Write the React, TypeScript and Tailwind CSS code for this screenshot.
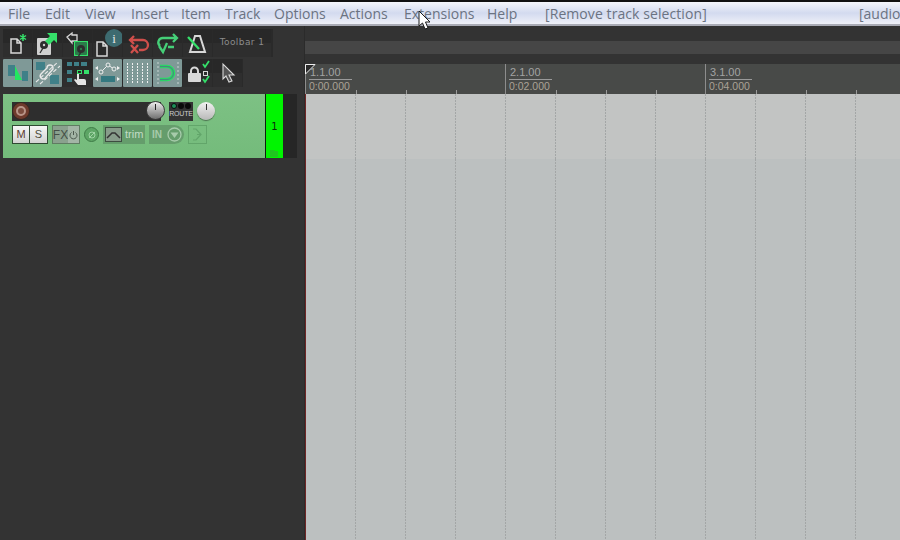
import React from "react";

const G = "#35e06a";
const W = "#d8d8d8";
const T = "#3f8088";

function Btn({ active, children }: { active?: boolean; children: React.ReactNode }) {
  return (
    <div className={`w-[29px] h-[28px] shrink-0 mr-px rounded-[1px] overflow-hidden ${active ? "bg-[#7f9997]" : "bg-gradient-to-b from-[#282828] from-50% to-[#2e2e2e] to-50%"}`}>
      <svg width="29" height="28" viewBox="0 0 29 28" className="block">{children}</svg>
    </div>
  );
}

const Doc = ({ x, y }: { x: number; y: number }) => (
  <path d={`M${x} ${y}h6l4 4v10h-10zM${x + 6} ${y}v4h4`} fill="#2a2a2a" stroke={W} strokeWidth="1.500" />
);

function Hdd({ x, y, fill = "#d0d0d0", w = 14, h = 17 }: { x: number; y: number; fill?: string; w?: number; h?: number }) {
  return (
    <g>
      <rect x={x} y={y} width={w} height={h} rx="1" fill={fill} />
      <circle cx={x + w / 2} cy={y + 7} r="4" fill="#2e2e2e" />
      <circle cx={x + w / 2} cy={y + 7} r="1.200" fill={fill} />
      <path d={`M${x + 3} ${y + 15}l3-5`} stroke="#2e2e2e" strokeWidth="1.300" />
    </g>
  );
}

function GridCells() {
  return (
    <>
      {Array.from({ length: 12 }).map((_, i) =>
        i === 0 ? (
          <div key={i} className="w-[50px] shrink-0 border-l border-l-[#6f2626]" />
        ) : (
          <div key={i} className="w-[50px] shrink-0">
            <div className="w-px h-full bg-[repeating-linear-gradient(to_bottom,#a3a6a6_0_2px,transparent_2px_3px)]" />
          </div>
        )
      )}
    </>
  );
}

function App() {
  const menu = [
    ["File", "w-[37px]"],
    ["Edit", "w-[40px]"],
    ["View", "w-[46px]"],
    ["Insert", "w-[50px]"],
    ["Item", "w-[44px]"],
    ["Track", "w-[49px]"],
    ["Options", "w-[66px]"],
    ["Actions", "w-[64px]"],
    ["Extensions", "w-[83px]"],
    ["Help", "w-[58px]"],
  ];
  const ruler = [
    ["1.1.00", "0:00.000"],
    ["2.1.00", "0:02.000"],
    ["3.1.00", "0:04.000"],
  ];
  return (
    <div className="relative w-[900px] h-[540px] overflow-hidden bg-[#333333] font-['Open_Sans','Noto_Sans',sans-serif]">
      {/* menu bar */}
      <div className="h-[26px] border-t-2 border-t-[#111111] border-b-2 border-b-[#a9abb5] bg-gradient-to-b from-[#f4f6fb] via-[#d3daef] via-50% to-[#eef0f8] flex items-center pl-2 text-[14px] text-[#6b7382] whitespace-nowrap overflow-hidden">
        {menu.map(([m, w]) => (
          <span key={m} className={`${w} shrink-0`}>{m}</span>
        ))}
        <span className="w-[314px] shrink-0 tracking-[0.08px]">[Remove track selection]</span>
        <span className="shrink-0">[audio</span>
      </div>

      <div className="flex h-[514px]">
        {/* left */}
        <div className="w-[305px] shrink-0 flex flex-col">
          <div className="pl-[3px] pt-[3px] h-[68px]">
            <div className="flex w-[270px] bg-[#2a2a2a]">
              <Btn>
                <Doc x={8} y={10} />
                <path d="M20 5v7M17 6.500l6 4M23 6.500l-6 4" stroke={G} strokeWidth="1.500" />
              </Btn>
              <Btn>
                <Hdd x={4} y={9} />
                <path d="M14 4h10v10l-3-3-5 5-4-4 5-5z" fill={G} />
              </Btn>
              <Btn>
                <path d="M4 8l5-4v2h5v6H9v2z" fill="#2a2a2a" stroke={W} strokeWidth="1.300" />
                <rect x="11" y="12" width="14" height="15" fill={G} />
                <Hdd x={12} y={13} fill="#2c7a4a" w={12} h={13} />
              </Btn>
              <Btn>
                <Doc x={4} y={13} />
                <circle cx="21" cy="9" r="9" fill="#3d6b70" />
                <text x="21" y="14" textAnchor="middle" fontSize="13" fill="#e8e8e8" fontFamily="Liberation Serif">i</text>
              </Btn>
              <Btn>
                <path d="M7 11h13a5 5 0 0 1 0 10h-4M11 7l-4 4 4 4M8 16l7 8M15 16l-7 8" fill="none" stroke="#cf4f4b" strokeWidth="2.300" />
              </Btn>
              <Btn>
                <path d="M24 9H10a4.500 4.500 0 0 0-3 8M20 5l4 4-4 4M6 17l4 6 4-9M15 18h6" fill="none" stroke="#45cf78" strokeWidth="2.300" />
              </Btn>
              <Btn>
                <path d="M12 7h5l5 16H7z" fill="none" stroke={W} strokeWidth="2" />
                <path d="M5 8l11 12" stroke={G} strokeWidth="2.300" />
              </Btn>
              <div className="w-[58px] h-[28px] bg-gradient-to-b from-[#282828] from-50% to-[#2e2e2e] to-50% flex items-center justify-center text-[9px] text-[#8c8c8c] tracking-[0.4px] font-['DejaVu_Sans',sans-serif]">Toolbar 1</div>
            </div>
            <div className="flex w-[240px] mt-[2px] bg-[#2a2a2a]">
              <Btn active>
                <rect x="5" y="6" width="7" height="11" fill={T} />
                <rect x="19" y="12" width="6" height="10" fill={T} />
                <path d="M12 7l7 14h-7z" fill="#22e85f" />
              </Btn>
              <Btn active>
                <rect x="3" y="3" width="9" height="8" fill={T} />
                <rect x="17" y="16" width="9" height="9" fill={T} />
                <path d="M3 23L25 3M7 25L27 7" stroke="#e8e8e8" strokeWidth="1.100" strokeDasharray="4 2" />
                <path d="M8 19a3 3 0 0 1 0-4l6-6a3 3 0 0 1 6 0l0 1-7 8a3 3 0 0 1-5 1z" fill="none" stroke="#e8e8e8" strokeWidth="1.400" />
              </Btn>
              <Btn>
                <g fill={T}>
                  <rect x="4" y="3" width="5" height="4" /><rect x="11" y="3" width="5" height="4" /><rect x="18" y="3" width="6" height="4" />
                  <rect x="4" y="11" width="5" height="4" /><rect x="4" y="19" width="5" height="4" />
                </g>
                <rect x="14.500" y="11.500" width="4" height="3" fill="none" stroke={G} />
                <rect x="21" y="11" width="5" height="4" fill={G} />
                <path d="M14 15h2v5l5 0a2 2 0 0 1 2 2v4h-8l-4-5 1-1 2 1z" fill="#e4e4e4" />
              </Btn>
              <Btn active>
                <path d="M8 13l7-7 6 4" fill="none" stroke="#efefef" strokeWidth="1" />
                <circle cx="15" cy="6" r="2" fill="#7f9997" stroke="#efefef" />
                <circle cx="8" cy="13" r="2" fill="#7f9997" stroke="#efefef" />
                <circle cx="21" cy="10" r="2" fill="#7f9997" stroke="#efefef" />
                <path d="M2 9l3-2v4zM27 9l-3-2v4zM2 20l3-2v4zM27 20l-3-2v4z" fill="#efefef" />
                <rect x="8" y="17" width="14" height="6" fill="#33787f" />
              </Btn>
              <Btn active>
                <path d="M4.500 4v20M9.500 4v20M14.500 4v20M19.500 4v20M24.500 4v20" stroke="#f0f0f0" strokeWidth="1" strokeDasharray="2 1" />
              </Btn>
              <Btn active>
                <path d="M5 3v23M25 3v23" stroke="#c9d4d2" strokeDasharray="2 2" />
                <path d="M7 7.500h7a6.500 6.500 0 0 1 0 13H7" fill="none" stroke="#22e85f" strokeWidth="3.500" />
                <path d="M7 7.500h7a6.500 6.500 0 0 1 0 13H7" fill="none" stroke="#4a8a80" strokeWidth="1.300" />
              </Btn>
              <Btn>
                <path d="M8 15v-3a3.500 3.500 0 0 1 7 0v3" fill="none" stroke="#d8d8d8" strokeWidth="2" />
                <rect x="5" y="14" width="13" height="9" rx="1" fill="#d8d8d8" />
                <path d="M20 5l2 3 4-6" fill="none" stroke={G} strokeWidth="1.800" />
                <rect x="20.500" y="12.500" width="4" height="4" fill="none" stroke="#d8d8d8" />
                <path d="M20 20l2 3 4-6" fill="none" stroke={G} strokeWidth="1.800" />
              </Btn>
              <Btn>
                <path d="M10 5v15l3-3 3 6 3-1-3-6h5z" fill="#555555" stroke="#d8d8d8" strokeWidth="1.100" />
              </Btn>
            </div>
          </div>

          {/* track panel */}
          <div className="ml-[3px] w-[294px] h-[64px] flex">
            <div className="w-[262px] h-full bg-gradient-to-b from-[#7dc184] to-[#74bb7b] pl-[9px] pt-[7px]">
              <div className="relative h-[20px] w-[153px] flex items-center">
                <div className="absolute left-0 right-[4px] top-px h-[19px] bg-[#2e2e2e]" />
                <div className="relative w-[18px] h-[18px] rounded-full bg-[#6e3a2c] border border-[#33251f] flex items-center justify-center">
                  <div className="w-[10px] h-[10px] rounded-full border-[2px] border-[#b89488] bg-[#7c4c3e]" />
                </div>
                <div className="absolute right-0 top-0 w-[19px] h-[19px] rounded-full bg-gradient-to-b from-[#eeeeee] to-[#707070] border border-[#3a3a3a] flex justify-center pt-[2px]">
                  <div className="w-px h-[6px] bg-[#222222]" />
                </div>
                <div className="absolute left-[157px] top-px w-[24px] h-[19px] bg-[#333333] flex flex-col items-center">
                  <div className="flex gap-px mt-px">
                    <span className="w-[6px] h-[6px] rounded-full bg-[#1c8f58] border border-[#0a0a0a]" />
                    <span className="w-[6px] h-[6px] rounded-full bg-[#0a0a0a]" />
                    <span className="w-[6px] h-[6px] rounded-full bg-[#0a0a0a]" />
                  </div>
                  <span className="text-[7px] leading-[10px] tracking-[-0.2px] text-[#cccccc] font-['Liberation_Sans',sans-serif]">ROUTE</span>
                </div>
                <div className="absolute left-[185px] top-px w-[18px] h-[18px] rounded-full bg-gradient-to-b from-[#f2f2f2] to-[#b8b8b8] shadow-[0_1px_1px_#4b6d4e] flex justify-center pt-[2px]">
                  <div className="w-px h-[6px] bg-[#333333]" />
                </div>
              </div>
              <div className="flex items-center h-[19px] mt-[4px] font-['Liberation_Sans',sans-serif]">
                <div className="w-[18px] h-[19px] bg-gradient-to-b from-[#f6f6f6] to-[#d2d2d2] border border-[#2f4a33] text-[11px] flex items-center justify-center text-[#5a3a30]">M</div>
                <div className="w-[19px] h-[19px] -ml-px bg-gradient-to-b from-[#f6f6f6] to-[#d2d2d2] border border-[#2f4a33] text-[11px] flex items-center justify-center text-[#4d4d3c]">S</div>
                <div className="ml-[4px] w-[28px] h-[19px] flex border border-[#5f7c62]">
                  <div className="w-[15px] bg-[#8aa18e] text-[12px] text-[#454f47] flex items-center justify-center">FX</div>
                  <div className="flex-1 bg-[#a3b5a6] flex items-center justify-center">
                    <svg width="9" height="10" viewBox="0 0 9 10"><path d="M2.500 2.500a3.500 3.500 0 1 0 4 0M4.500 1v4" fill="none" stroke="#4d5a4f" /></svg>
                  </div>
                </div>
                <div className="ml-[4px] w-[15px] h-[15px] rounded-full bg-[#5da565] border border-[#3f7b47] flex items-center justify-center">
                  <svg width="10" height="10" viewBox="0 0 10 10"><circle cx="5" cy="5" r="3" fill="none" stroke="#9ed3a3" /><path d="M2 8l6-6" stroke="#9ed3a3" /></svg>
                </div>
                <div className="ml-[4px] w-[42px] h-[19px] bg-[#659d6c] flex items-center">
                  <div className="ml-[2px] w-[17px] h-[15px] bg-[#879c8a] border border-[#3d4d40]">
                    <svg width="15" height="13" viewBox="0 0 15 13"><path d="M1 10l5-5 3 0 5 5" fill="none" stroke="#333333" strokeWidth="1.500" /></svg>
                  </div>
                  <span className="ml-[3px] text-[11px] text-[#c3dcc6]">trim</span>
                </div>
                <div className="ml-[4px] w-[35px] h-[19px] bg-[#659d6c] rounded-r-full flex items-center pl-[3px]">
                  <span className="text-[10px] font-bold text-[#a7cbab]">IN</span>
                  <svg className="ml-[5px]" width="15" height="15" viewBox="0 0 15 15"><circle cx="7.500" cy="7.500" r="6.500" fill="none" stroke="#a7cbab" strokeWidth="1.300" /><path d="M3.500 5.500h8l-4 5.500z" fill="#a7cbab" /></svg>
                </div>
                <div className="ml-[4px] w-[19px] h-[19px] border border-[#62a56a] flex items-center justify-center">
                  <svg width="13" height="13" viewBox="0 0 13 13"><path d="M2 1h3l5 5.500-5 5.500H2M10 6.500H6" fill="none" stroke="#62a56a" strokeWidth="1.200" /></svg>
                </div>
              </div>
            </div>
            <div className="relative w-[18px] h-full bg-[#00f500] border-l border-l-[#0f1f10] flex items-center justify-center text-[10px] text-[#0b2b0b] font-['DejaVu_Sans',sans-serif]">
              1
              <svg className="absolute left-[3px] bottom-[1px]" width="10" height="7" viewBox="0 0 10 7"><path d="M1 0h4l1 1h3v6H1z" fill="#1fc61f" /></svg>
            </div>
            <div className="flex-1 bg-[#262626]" />
          </div>
        </div>

        {/* right */}
        <div className="flex-1 min-w-0 flex flex-col border-l border-l-[#2b2b2b] -ml-px">
          <div className="h-[38px] pt-[15px] shrink-0 bg-[#333333]">
            <div className="h-[13px] bg-[#464646]" />
          </div>
          <div className="relative h-[30px] shrink-0 bg-[#484a48] flex overflow-hidden">
            {ruler.map(([a, b]) => (
              <div key={a} className="w-[200px] shrink-0 border-l border-l-[#8d8d8d] pl-[3px] pt-[1px] relative font-['Liberation_Sans',sans-serif] text-[#a3a3a3]">
                <div className="w-[43px] border-b border-b-[#9a9a9a] text-[11px] leading-[14px] pl-[1px]">{a}</div>
                <div className="text-[10.5px] leading-[13px] text-[#aaa296]">{b}</div>
                <div className="absolute bottom-0 left-0 flex">
                  <span className="w-[50px]" />
                  <span className="w-[50px] h-[4px] border-l border-l-[#9a9a9a]" />
                  <span className="w-[50px] h-[4px] border-l border-l-[#9a9a9a]" />
                  <span className="w-[50px] h-[4px] border-l border-l-[#9a9a9a]" />
                </div>
              </div>
            ))}
            <svg className="absolute left-0 top-0" width="12" height="12" viewBox="0 0 12 12"><path d="M.5 10V.5H10z" fill="#2b2b2b" stroke="#eeeeee" /></svg>
          </div>
          <div className="h-[65px] shrink-0 bg-[#c2c4c3] flex overflow-hidden">
            <GridCells />
          </div>
          <div className="flex-1 bg-[#bcc0c0] flex overflow-hidden">
            <GridCells />
          </div>
        </div>
      </div>

      {/* mouse pointer */}
      <svg className="absolute left-[418px] top-[10px]" width="14" height="21" viewBox="0 0 14 21">
        <path d="M1 1v15l3.500-3 2.500 6 3-1-2.500-6H12z" fill="#ffffff" stroke="#1a1a1a" strokeWidth="1" />
      </svg>
    </div>
  );
}

export default App;
